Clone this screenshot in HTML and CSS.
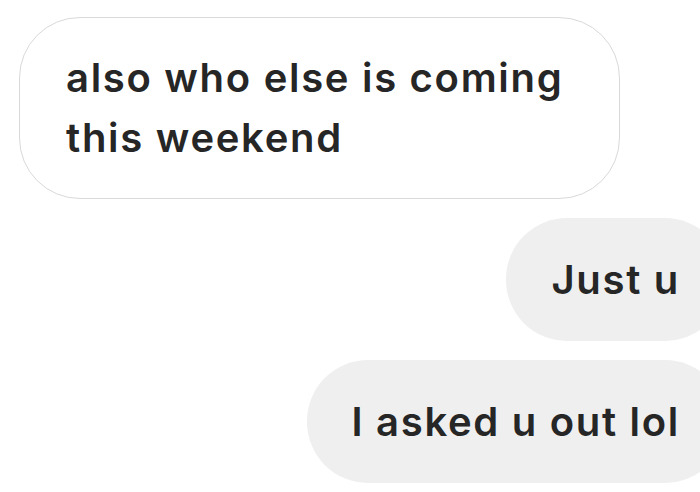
FILE: index.html
```html
<!DOCTYPE html>
<html lang="en">
<head>
<meta charset="utf-8">
<title>Messages</title>
<link rel="stylesheet" href="styles.css">
</head>
<body>
<main class="thread">
  <div class="msg msg-in">also who else is coming this weekend</div>
  <div class="msg msg-out">Just u</div>
  <div class="msg msg-out">I asked u out lol</div>
</main>
</body>
</html>
```
FILE: styles.css
```css
html, body {
  margin: 0;
  padding: 0;
  background: #ffffff;
  overflow: hidden;
}
body {
  width: 700px;
  height: 492px;
  font-family: Inter, "Liberation Sans", sans-serif;
  color: #262626;
}
.thread {
  display: flex;
  flex-direction: column;
  gap: 19px;
  padding: 17px 0 0 19px;
  margin-right: -26px;
}
.msg {
  font-size: 40px;
  font-weight: 600;
  letter-spacing: 1.7px;
  line-height: 60px;
  padding: 30px 46px;
  border-radius: 61px;
  box-sizing: border-box;
}
.msg-in {
  align-self: flex-start;
  width: 601px;
  border: 1.5px solid #d9d9d9;
  background: #ffffff;
}
.msg-out {
  align-self: flex-end;
  background: #efefef;
  padding-top: 31.5px;
  padding-bottom: 31.5px;
  padding-left: 45px;
}
```
